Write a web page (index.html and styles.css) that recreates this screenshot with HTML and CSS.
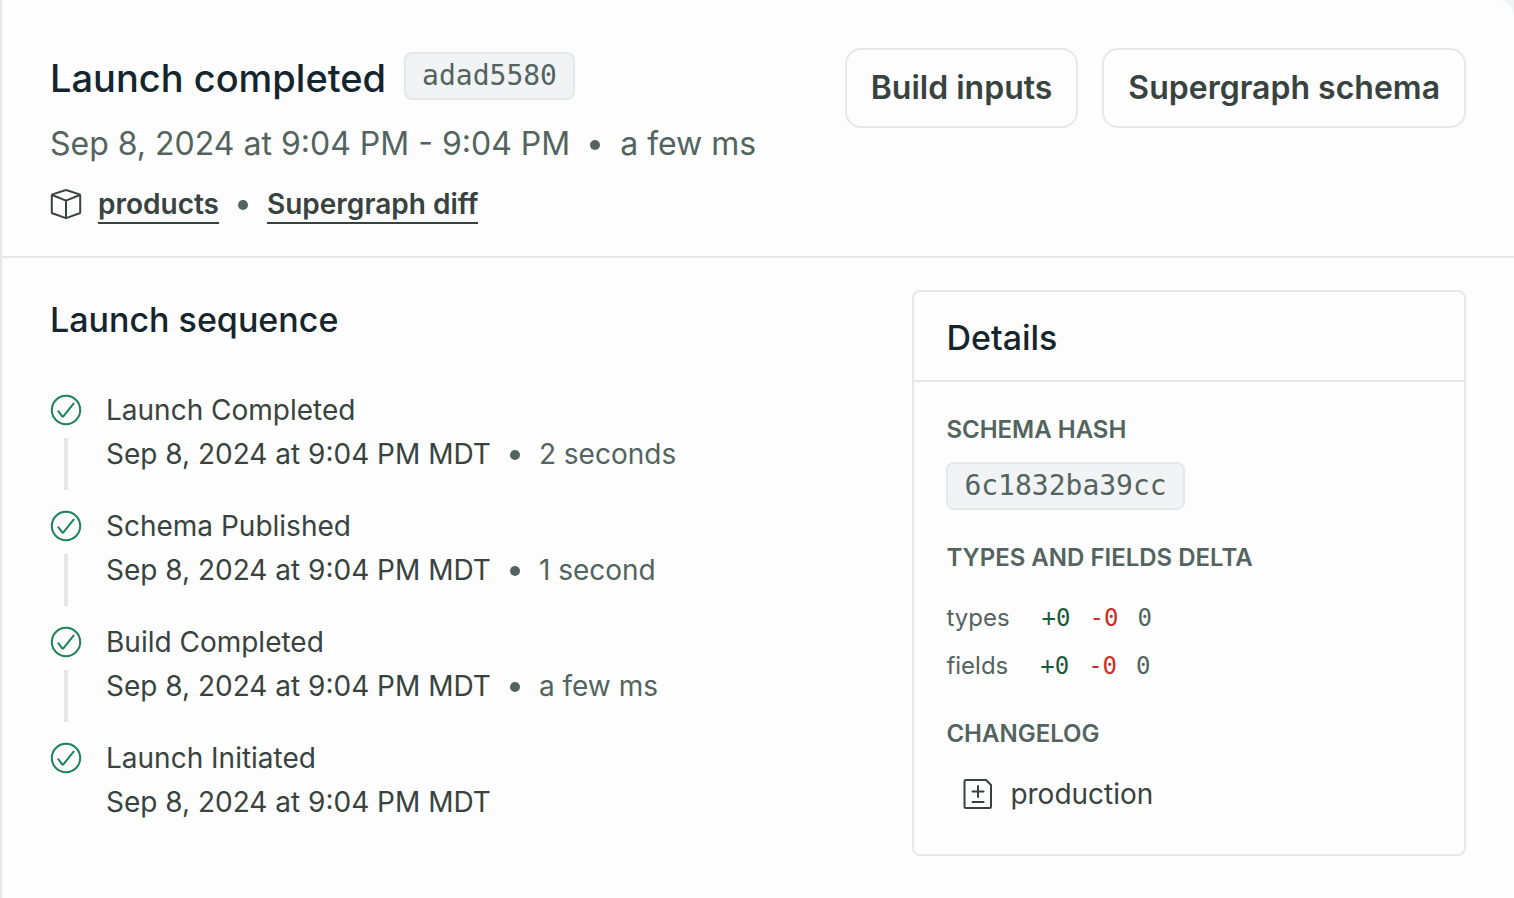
FILE: index.html
```
<!DOCTYPE html>
<html lang="en">
<head>
<meta charset="utf-8">
<meta name="viewport" content="width=device-width, initial-scale=1">
<title>Launch completed</title>
<link rel="stylesheet" href="styles.css">
</head>
<body>
<svg class="sprite" aria-hidden="true">
  <symbol id="check" viewBox="0 0 32 32">
    <circle cx="16" cy="16" r="14.2"/>
    <path d="M8.3 17.2l3.9 5.2c.3.4.8.4 1.1 0L23.6 9.6"/>
  </symbol>
</svg>
<main class="panel">
  <header class="top">
    <div class="summary">
      <div class="title-row">
        <h1 class="title">Launch completed</h1>
        <code class="chip">adad5580</code>
      </div>
      <p class="when"><span>Sep 8, 2024 at 9:04 PM - 9:04 PM</span><i class="dot"></i><span>a few ms</span></p>
      <div class="links">
        <svg class="icon cube" viewBox="0 0 32 32" aria-hidden="true"><path d="M15.2 2.2Q16 1.9 16.8 2.2L29.6 6.4Q30.2 6.6 30.2 7.3V24.3Q30.2 25 29.6 25.3L16.8 29.9Q16 30.2 15.2 29.9L2.4 25.3Q1.8 25 1.8 24.3V7.3Q1.8 6.6 2.4 6.4ZM2.2 7L16 12.6L29.8 7M16 12.6V30"/></svg>
        <a class="link" href="#products">products</a>
        <i class="dot"></i>
        <a class="link" href="#diff">Supergraph diff</a>
      </div>
    </div>
    <div class="actions">
      <button class="button" type="button">Build inputs</button>
      <button class="button" type="button">Supergraph schema</button>
    </div>
  </header>
  <div class="content">
    <section class="sequence">
      <h2 class="heading">Launch sequence</h2>
      <ol class="steps">
        <li class="step">
          <div class="marker"><svg class="icon check" aria-hidden="true"><use href="#check"/></svg></div>
          <div>
            <p class="line">Launch Completed</p>
            <p class="line"><span>Sep 8, 2024 at 9:04 PM MDT</span><i class="dot"></i><span class="muted">2 seconds</span></p>
          </div>
        </li>
        <li class="step">
          <div class="marker"><svg class="icon check" aria-hidden="true"><use href="#check"/></svg></div>
          <div>
            <p class="line">Schema Published</p>
            <p class="line"><span>Sep 8, 2024 at 9:04 PM MDT</span><i class="dot"></i><span class="muted">1 second</span></p>
          </div>
        </li>
        <li class="step">
          <div class="marker"><svg class="icon check" aria-hidden="true"><use href="#check"/></svg></div>
          <div>
            <p class="line">Build Completed</p>
            <p class="line"><span>Sep 8, 2024 at 9:04 PM MDT</span><i class="dot"></i><span class="muted">a few ms</span></p>
          </div>
        </li>
        <li class="step">
          <div class="marker"><svg class="icon check" aria-hidden="true"><use href="#check"/></svg></div>
          <div>
            <p class="line">Launch Initiated</p>
            <p class="line">Sep 8, 2024 at 9:04 PM MDT</p>
          </div>
        </li>
      </ol>
    </section>
    <aside class="card">
      <div class="card-head"><h2 class="heading">Details</h2></div>
      <div class="card-body">
        <section class="group">
          <h3 class="label">SCHEMA HASH</h3>
          <code class="chip">6c1832ba39cc</code>
        </section>
        <section>
          <h3 class="label">TYPES AND FIELDS DELTA</h3>
          <dl class="deltas">
            <div class="delta"><dt>types</dt><dd class="added">+0</dd><dd class="removed">-0</dd><dd>0</dd></div>
            <div class="delta"><dt>fields</dt><dd class="added">+0</dd><dd class="removed">-0</dd><dd>0</dd></div>
          </dl>
        </section>
        <section>
          <h3 class="label">CHANGELOG</h3>
          <a class="variant" href="#changelog">
            <svg class="icon" viewBox="0 0 32 32" aria-hidden="true"><path d="M4 2H24L29 7V28.5Q29 30 27.5 30H4Q2.5 30 2.5 28.5V3.5Q2.5 2 4 2ZM16 8V19M10.5 13.5H21.5M10.5 24H21.5"/></svg>
            <span>production</span>
          </a>
        </section>
      </div>
    </aside>
  </div>
</main>
</body>
</html>
```
FILE: styles.css
```
:root {
  --surface: #fdfdfd;
  --line: #e6e8e8;
  --heading: #15252d;
  --text: #38433f;
  --muted: #536460;
}
* { box-sizing: border-box; }
body {
  margin: 0;
  background: #f1f3f4;
  color: var(--text);
  font: 28px/44px Inter, "Liberation Sans", sans-serif;
}
h1, h2, h3, p, ol, dl, dd { margin: 0; padding: 0; }
.sprite { display: none; }
.panel {
  min-height: 100vh;
  background: var(--surface);
  border-left: 2px solid var(--line);
  border-top-right-radius: 16px;
}
.top {
  display: flex;
  justify-content: space-between;
  align-items: flex-start;
  padding: 48px 48px 32px;
  border-bottom: 2px solid var(--line);
}
.title-row { display: flex; align-items: flex-start; gap: 18px; }
.title-row .chip { margin-top: 4px; }
.title {
  color: var(--heading);
  font-size: 38px;
  font-weight: 500;
  line-height: 60px;
}
.chip {
  display: inline-block;
  padding: 0 16px;
  border: 2px solid var(--line);
  border-radius: 8px;
  background: #f1f3f5;
  color: var(--muted);
  font: 28px/44px "DejaVu Sans Mono", monospace;
}
.when {
  display: flex;
  align-items: center;
  margin: 12px 0 16px;
  color: var(--muted);
  font-size: 32px;
  line-height: 48px;
}
.dot {
  flex: none;
  width: 10px;
  height: 10px;
  margin: 2px 20px 0;
  border-radius: 50%;
  background: var(--muted);
}
.links { display: flex; align-items: center; height: 40px; }
.links .dot, .line .dot { margin: 2px 19px 0; }
.icon {
  flex: none;
  display: block;
  width: 32px;
  height: 32px;
  fill: none;
  stroke: currentColor;
  stroke-width: 2;
  stroke-linecap: round;
  stroke-linejoin: round;
}
.cube { margin-right: 16px; }
.link {
  padding-top: 2px;
  border-bottom: 2px solid;
  color: var(--text);
  font-weight: 600;
  line-height: 36px;
  text-decoration: none;
}
.actions { display: flex; gap: 24px; }
.button {
  height: 80px;
  padding: 0 24px;
  border: 2px solid var(--line);
  border-radius: 16px;
  background: transparent;
  color: var(--text);
  font: 600 32px/48px Inter, "Liberation Sans", sans-serif;
}
.content {
  display: grid;
  grid-template-columns: 3fr 2fr;
  align-items: start;
  gap: 32px;
  padding: 32px 48px;
}
.heading {
  color: var(--heading);
  font-size: 34px;
  font-weight: 500;
  line-height: 60px;
}
.steps { display: grid; gap: 28px; margin-top: 38px; list-style: none; }
.step { display: flex; gap: 24px; }
.marker {
  display: flex;
  flex-direction: column;
  align-items: center;
  gap: 12px;
  padding-top: 6px;
}
.step:not(:last-child) .marker { margin-bottom: -14px; }
.step:not(:last-child) .marker::after {
  content: "";
  flex: 1;
  width: 4px;
  background: #e6e7e7;
}
.check { color: #1c8558; }
.line { display: flex; align-items: center; }
.muted { color: var(--muted); }
.card { border: 2px solid var(--line); border-radius: 8px; }
.card-head { padding: 16px 32px 12px; border-bottom: 2px solid var(--line); }
.card-body { display: grid; gap: 28px; padding: 32px 32px 40px; }
.group { margin-bottom: 4px; }
.label {
  color: var(--muted);
  font-size: 24px;
  font-weight: 600;
  line-height: 32px;
}
.group .chip { display: block; width: fit-content; margin-top: 16px; }
.deltas { margin-top: 20px; color: var(--muted); font-size: 24px; line-height: 48px; }
.delta { display: flex; gap: 19px; }
.delta dt { margin-right: 13px; }
.delta dd { font-family: "DejaVu Sans Mono", monospace; }
.delta .added { color: #1a5a3a; }
.delta .removed { color: #c8302b; }
.variant {
  display: flex;
  align-items: center;
  gap: 16px;
  height: 40px;
  margin: 24px 16px 0;
  color: var(--text);
  text-decoration: none;
}
```
